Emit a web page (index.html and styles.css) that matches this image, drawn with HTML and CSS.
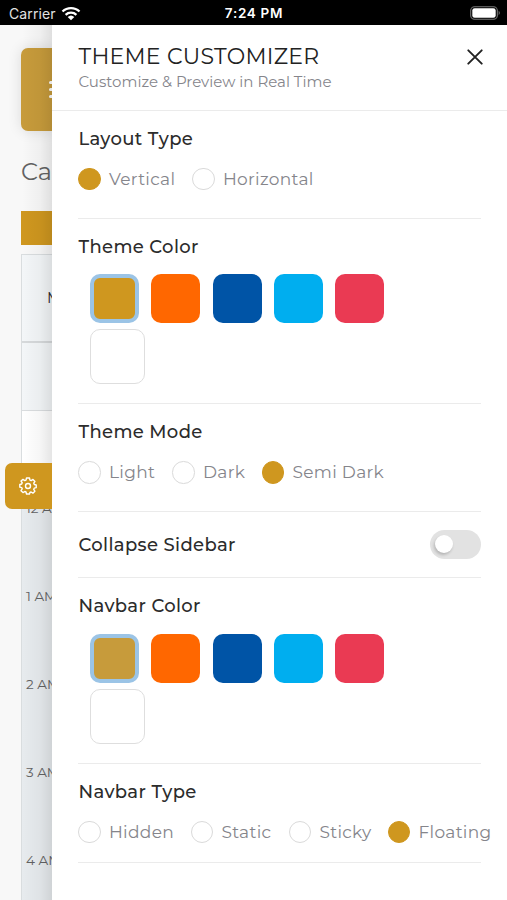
FILE: index.html
```html
<!DOCTYPE html>
<html lang="en">
<head>
<meta charset="utf-8">
<title>Theme Customizer</title>
<link rel="stylesheet" href="styles.css">
</head>
<body>
<header class="status">
  <div class="carrier"><span>Carrier</span>
    <svg width="20" height="15" viewBox="0 0 20 15"><g fill="none" stroke="#fff" stroke-width="2.3"><path d="M1.5 5.5a12.2 12.2 0 0 1 17 0"/><path d="M4.6 8.8a7.8 7.8 0 0 1 10.8 0"/></g><path d="M6.7 11a4.8 4.8 0 0 1 6.6 0L10 14.2z" fill="#fff"/></svg>
  </div>
  <div class="clock">7:24 PM</div>
  <svg class="battery" width="31" height="14" viewBox="0 0 31 14"><rect x=".7" y=".7" width="26.6" height="12.6" rx="3.8" fill="none" stroke="#777" stroke-width="1.1"/><rect x="2.3" y="2.2" width="23.4" height="9.6" rx="2.3" fill="#fff"/><path d="M28.7 4.8q2.2 2.1 0 4.4z" fill="#777"/></svg>
</header>
<div class="screen">
  <main class="page">
    <div class="navbar"><i></i><i></i><i></i></div>
    <h1>Calendar</h1>
    <div class="band"></div>
    <div class="calendar">
      <div class="head">M</div>
      <div class="subhead"></div>
      <div class="allday"></div>
      <div class="hours"><span>12 AM</span><span>1 AM</span><span>2 AM</span><span>3 AM</span><span>4 AM</span></div>
    </div>
    <div class="shade"></div>
    <div class="gear"><svg width="18" height="18" viewBox="0 0 18 18" fill="none" stroke="#fff" stroke-width="1.4" stroke-linejoin="round"><path d="M7.5 1h3l.45 2.1 1.25.5 1.8-1.15 1.95 1.95-1.2 1.85.55 1.2 1.9.5v2.7l-2 .5-.5 1.25 1.2 1.8-2 1.95-1.8-1.15-1.2.5L10.5 17h-3l-.5-2-1.2-.5L4 15.6l-2-1.95 1.2-1.8-.5-1.25-1.9-.45v-2.7l1.9-.5.5-1.2L2 4l2-1.6 1.8 1.15L7 3.1z"/><circle cx="9" cy="9" r="2.5"/></svg></div>
  </main>
  <aside class="panel">
    <div class="top">
      <div><h2>THEME CUSTOMIZER</h2><p>Customize &amp; Preview in Real Time</p></div>
      <svg width="16" height="16" viewBox="0 0 16 16" stroke="#222" stroke-width="1.9" stroke-linecap="round"><path d="M1.3 1.3l13.4 13.4M14.7 1.3L1.3 14.7"/></svg>
    </div>
    <section class="choices"><h3>Layout Type</h3>
      <div class="radios"><label class="on vertical">Vertical</label><label class="horizontal">Horizontal</label></div></section>
    <section class="colors"><h3>Theme Color</h3>
      <div class="swatches"><b class="gold selected"></b><b class="orange"></b><b class="blue"></b><b class="cyan"></b><b class="red"></b><b class="white"></b></div></section>
    <section class="choices mode"><h3>Theme Mode</h3>
      <div class="radios"><label class="light">Light</label><label class="dark">Dark</label><label class="on semi">Semi Dark</label></div></section>
    <section class="collapse"><h3>Collapse Sidebar</h3><div class="switch"></div></section>
    <section class="colors"><h3>Navbar Color</h3>
      <div class="swatches"><b class="tan selected"></b><b class="orange"></b><b class="blue"></b><b class="cyan"></b><b class="red"></b><b class="white"></b></div></section>
    <section class="choices type"><h3>Navbar Type</h3>
      <div class="radios"><label class="hidden">Hidden</label><label class="static">Static</label><label class="sticky">Sticky</label><label class="on floating">Floating</label></div></section>
  </aside>
</div>
</body>
</html>
```
FILE: styles.css
```css
*, *::before { box-sizing: border-box; }
body { margin: 0; height: 900px; overflow: hidden; background: #fff; font-family: Montserrat, Inter, sans-serif; color: #2c2c2c; }
h1, h2, h3, p { margin: 0; font-weight: 400; }
svg { display: block; flex: none; }
.status { height: 25px; background: #000; color: #fff; display: grid; grid-template-columns: 1fr auto 1fr; align-items: center; padding: 1px 6px 0 9px; font-family: Inter, sans-serif; font-size: 14px; }
.carrier { display: flex; align-items: center; gap: 5px; color: #e2e2e2; letter-spacing: .1px; }
.clock { font-weight: 600; font-size: 13.5px; letter-spacing: .7px; margin-left: -2px; }
.battery { justify-self: end; }
.screen { display: flex; height: 875px; }
.page { position: relative; width: 52px; flex: none; background: #f8f8f8; padding: 23px 0 0 21px; overflow: hidden; white-space: nowrap; }
.navbar { height: 83px; border-radius: 7px 0 0 7px; background: #c79b3b; box-shadow: 0 0 14px rgba(0,0,0,.12); display: flex; flex-direction: column; justify-content: center; gap: 4px; padding-left: 28px; }
.navbar i { width: 18px; height: 3px; border-radius: 2px; background: #fff; }
h1 { font-size: 24px; line-height: 30px; margin-top: 26px; color: #626262; }
.band { height: 34px; margin-top: 24px; background: #cf971f; }
.calendar { margin-top: 9px; height: 660px; border: 1px solid #d9dddf; border-right: 0; background: #e7ebee; }
.head { height: 88px; padding: 33px 0 0 25px; font-size: 15px; line-height: 20px; background: #f3f6f8; border-bottom: 2px solid #d6d9db; }
.subhead { height: 68px; background: #f3f6f8; border-bottom: 1px solid #dadddf; }
.allday { height: 88px; background: #fff; }
.hours { display: flex; flex-direction: column; gap: 70px; padding-left: 4px; font-size: 13.5px; line-height: 18px; color: #626262; }
.shade { position: absolute; inset: 0 0 0 auto; width: 30px; background: linear-gradient(90deg, transparent, rgba(0,0,0,.035) 60%, rgba(0,0,0,.10)); }
.gear { position: absolute; left: 5px; top: 437.5px; width: 47px; height: 46.5px; border-radius: 7px 0 0 7px; background: #cf971f; padding: 14px; }
.panel { width: 455px; flex: none; background: #fff; }
.top { height: 85.5px; border-bottom: 1px solid #ebebeb; padding: 18px 24px 0 26.5px; display: flex; justify-content: space-between; }
.top svg { margin-top: 5.5px; }
h2 { font-size: 22px; line-height: 27px; letter-spacing: .28px; color: #222; }
p { font-size: 15px; line-height: 22px; color: #85858b; margin-top: 1px; }
section { width: 403px; margin-left: 26px; border-bottom: 1px solid #ebebeb; }
h3 { font-size: 18px; font-weight: 500; line-height: 24px; letter-spacing: .35px; padding-left: .5px; }
.choices { height: 108px; padding-top: 16px; }
.colors { height: 185.5px; padding-top: 16px; }
.collapse { height: 66px; display: flex; align-items: center; justify-content: space-between; }
.type { height: 99px; }
.radios { display: flex; margin-top: 17px; white-space: nowrap; }
label { display: flex; align-items: center; gap: 8.5px; height: 22.5px; flex: none; font-size: 17px; letter-spacing: .3px; color: #85858b; }
label::before { content: ""; width: 22.5px; height: 22.5px; border: 1px solid #dadada; border-radius: 50%; flex: none; }
.on::before { background: #cf971f; border-color: #cf971f; }
.vertical { width: 114px; }
.light { width: 94px; }
.dark { width: 89.5px; }
.hidden { width: 112.5px; }
.static { width: 98px; }
.sticky { width: 99px; }
.swatches { display: flex; flex-wrap: wrap; width: 320px; margin: 15.5px 0 0 12.4px; gap: 6px 12.1px; }
.swatches b { width: 49px; height: 49px; border-radius: 10px; }
.gold { background: #cf971f; }
.tan { background: #c79b3b; }
.orange { background: #ff6700; }
.blue { background: #0054a6; }
.cyan { background: #00aeef; }
.red { background: #ea3a53; }
.swatches .selected { border: 4px solid #9bc4e6; }
.swatches .white { width: 55px; height: 55px; border: 1px solid #dedede; background: #fff; }
.switch { width: 51.5px; height: 29.5px; border-radius: 15px; background: #e2e2e2; padding: 5.5px; }
.switch::before { content: ""; display: block; width: 18px; height: 18px; border-radius: 50%; background: #fff; box-shadow: -1px 2px 3px rgba(0,0,0,.2); }
```
